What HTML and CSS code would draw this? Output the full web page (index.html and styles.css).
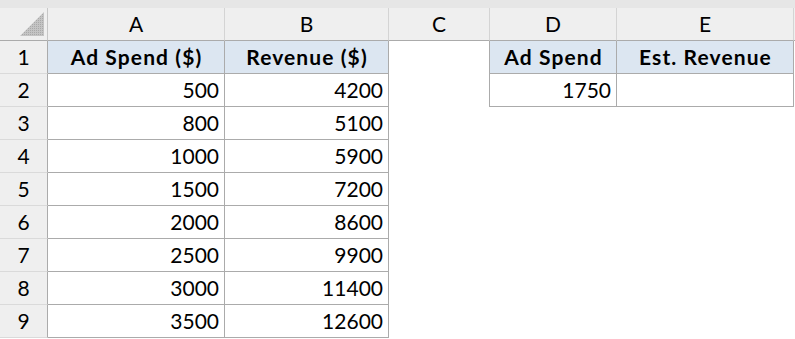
FILE: index.html
```html
<!DOCTYPE html>
<html>
<head>
<meta charset="utf-8">
<link rel="stylesheet" href="styles.css">
</head>
<body>
<div class="strip"></div>
<div class="sheet">
  <div class="ch corner"><svg width="47" height="32" viewBox="0 0 47 32"><defs><pattern id="dots" width="2" height="2" patternUnits="userSpaceOnUse"><rect width="2" height="2" fill="#c4c4c4"/><rect width="1" height="1" fill="#a9a9a9"/></pattern></defs><polygon points="20,28 44,4 44,28" fill="url(#dots)"/></svg></div>
  <div class="ch">A</div><div class="ch">B</div><div class="ch">C</div><div class="ch">D</div><div class="ch">E</div><div class="ch fill"></div>

  <div class="rh">1</div><div class="c b hd">Ad Spend ($)</div><div class="c b hd">Revenue ($)</div><div class="c rb"></div><div class="c b hd">Ad Spend</div><div class="c b hd">Est. Revenue</div><div class="c"></div>
  <div class="rh">2</div><div class="c b n">500</div><div class="c b n">4200</div><div class="c rb"></div><div class="c b n">1750</div><div class="c b n"></div><div class="c"></div>
  <div class="rh">3</div><div class="c b n">800</div><div class="c b n">5100</div><div class="c"></div><div class="c"></div><div class="c"></div><div class="c"></div>
  <div class="rh">4</div><div class="c b n">1000</div><div class="c b n">5900</div><div class="c"></div><div class="c"></div><div class="c"></div><div class="c"></div>
  <div class="rh">5</div><div class="c b n">1500</div><div class="c b n">7200</div><div class="c"></div><div class="c"></div><div class="c"></div><div class="c"></div>
  <div class="rh">6</div><div class="c b n">2000</div><div class="c b n">8600</div><div class="c"></div><div class="c"></div><div class="c"></div><div class="c"></div>
  <div class="rh">7</div><div class="c b n">2500</div><div class="c b n">9900</div><div class="c"></div><div class="c"></div><div class="c"></div><div class="c"></div>
  <div class="rh">8</div><div class="c b n">3000</div><div class="c b n">11400</div><div class="c"></div><div class="c"></div><div class="c"></div><div class="c"></div>
  <div class="rh">9</div><div class="c b n">3500</div><div class="c b n">12600</div><div class="c"></div><div class="c"></div><div class="c"></div><div class="c"></div>
</div>
</body>
</html>
```
FILE: styles.css
```css
html, body {
  margin: 0;
  padding: 0;
  background: #ffffff;
}
body {
  font-family: Lato, "Liberation Sans", sans-serif;
  font-size: 21px;
  color: #000;
  width: 795px;
  height: 339px;
  overflow: hidden;
}
.strip {
  height: 8px;
  background: #e6e6e6;
}
.sheet {
  display: grid;
  grid-template-columns: 48px 177px 164px 101px 127px 177px 1fr;
  grid-auto-rows: 33px;
}
.sheet > div {
  box-sizing: border-box;
  line-height: 32px;
  white-space: nowrap;
  overflow: hidden;
}
.ch {
  background: #efefef;
  text-align: center;
  border-right: 1px solid #d4d4d4;
  border-bottom: 1px solid #ababab;
}
.ch.corner {
  border-right: 1px solid #c6c6c6;
  line-height: 0;
}
.ch.corner svg {
  display: block;
}
.ch.fill {
  border-right: none;
}
.rh {
  background: #efefef;
  text-align: center;
  border-right: 1px solid #ababab;
  border-bottom: 1px solid #dadada;
}
.c {
  background: #fff;
}
.b {
  border-right: 1px solid #ababab;
  border-bottom: 1px solid #ababab;
}
.rb {
  border-right: 1px solid #ababab;
}
.hd {
  background: #dce6f1;
  font-weight: bold;
  text-align: center;
  letter-spacing: 1.1px;
  text-indent: 1px;
}
.n {
  text-align: right;
  padding-right: 5px;
}
```
